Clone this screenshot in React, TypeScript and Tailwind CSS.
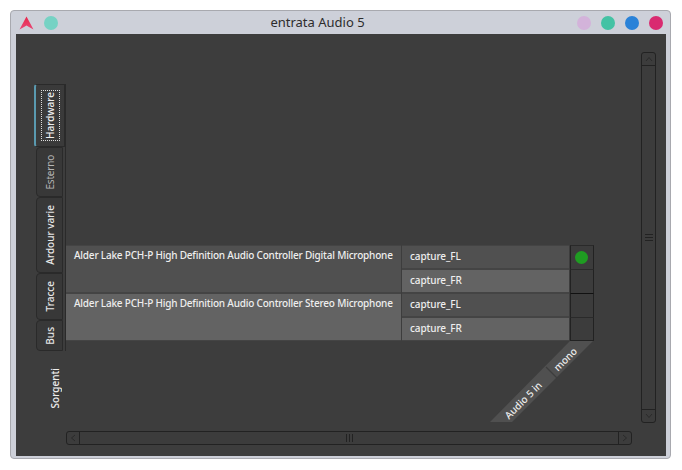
import React from 'react';

const tabs = [
  { label: 'Hardware', h: 'h-[63px]', active: true },
  { label: 'Esterno', h: 'h-[50px]', active: false },
  { label: 'Ardour varie', h: 'h-[76px]', active: false },
  { label: 'Tracce', h: 'h-[47px]', active: false },
  { label: 'Bus', h: 'h-[31px]', active: false },
];

const groups = [
  { name: 'Alder Lake PCH-P High Definition Audio Controller Digital Microphone', on: true },
  { name: 'Alder Lake PCH-P High Definition Audio Controller Stereo Microphone', on: false },
];

const vertical = '[writing-mode:vertical-rl] rotate-180';

const Tab = ({ label, h, active }: { label: string; h: string; active: boolean }) => {
  if (active) {
    return (
      <div className={`${h} w-[31px] -ml-[1px] flex items-center justify-center bg-[#3a3a3a] border border-[#2a2a2a] border-l-2 border-l-[#5a9ab0] rounded-l-[3px]`}>
        <span className={`${vertical} text-[10px] leading-[15px] font-medium text-[#eeeeee] outline-1 outline-dotted outline-[#dddddd] py-[1px] px-[1px]`}>
          {label}
        </span>
      </div>
    );
  }
  return (
    <div className={`${h} w-[27px] ml-[1px] flex items-center justify-center bg-[#383838] border border-[#2a2a2a] rounded-l-[4px]`}>
      <span className={`${vertical} leading-[14px] text-[10px] ${label === 'Esterno' ? 'tracking-[-0.2px] text-[#b5b5b5] font-normal' : 'text-[#e6e6e6] font-medium'}`}>
        {label}
      </span>
    </div>
  );
};

const Grip = ({ vert }: { vert: boolean }) => (
  <div className={`flex ${vert ? 'flex-col gap-[2px] w-[8px]' : 'flex-row gap-[2px] h-[8px]'}`}>
    {[0, 1, 2].map((i) => (
      <div key={i} className={`${vert ? 'h-[1px] w-full' : 'w-[1px] h-full'} bg-[#222222]`} />
    ))}
  </div>
);

const Row = ({ port, light, on, last, first }: { port: string; light: boolean; on?: boolean; last: boolean; first: boolean }) => (
  <div className="flex h-[24px]">
    <div className={`w-[167px] ml-[1px] pl-[8px] pb-[1px] flex items-center text-[10px] tracking-[-0.1px] font-medium text-[#eeeeee] border-y border-[#444444] ${light ? 'bg-[#636363]' : 'bg-[#505050]'}`}>
      {port}
    </div>
    <div className={`w-[24px] ml-[1px] flex items-center justify-center bg-[#3c3c3c] border-x border-t ${first ? 'border-t-[#111111]' : 'border-t-[#2a2a2a]'} border-x-[#222222] ${last ? 'border-b border-b-[#222222]' : ''}`}>
      {on && <div className="w-[13px] h-[13px] rounded-full bg-[#1f9c22] -ml-[1px]" />}
    </div>
  </div>
);

export default function App() {
  return (
    <div className="w-[682px] h-[470px] bg-white pt-[10px] pl-[10px] font-['Noto_Sans',sans-serif]">
      <div className="w-[661px] h-[449px] bg-[#cdd0d9] border border-[#a8a9af] rounded-[4px] flex flex-col">
        <div className="h-[23px] shrink-0 flex items-center pl-[8px] pr-[7px]">
          <svg width="15" height="14" viewBox="0 0 15 14" className="shrink-0">
            <defs>
              <linearGradient id="logo" x1="0" y1="0" x2="0" y2="1">
                <stop offset="0" stopColor="#e8264a" />
                <stop offset="1" stopColor="#e84a78" />
              </linearGradient>
            </defs>
            <path d="M7.5 0.5 L14.5 13.5 L10 11 L7.5 9.5 L5 11 L0.5 13.5 Z" fill="url(#logo)" />
          </svg>
          <div className="w-[14px] h-[14px] ml-[10px] rounded-full bg-[#76d2c4]" />
          <div className="flex-1 text-center text-[13px] text-[#2c2c2c]">entrata Audio 5</div>
          <div className="flex gap-[10px]">
            <div className="w-[14px] h-[14px] rounded-full bg-[#d3b3da]" />
            <div className="w-[14px] h-[14px] rounded-full bg-[#44c2a4]" />
            <div className="w-[14px] h-[14px] rounded-full bg-[#2a82d8]" />
            <div className="w-[14px] h-[14px] rounded-full bg-[#d92a70]" />
          </div>
        </div>

        <div className="ml-[5px] w-[650px] h-[422px] bg-[#3d3d3d] flex">
          <div className="flex-1 flex flex-col">
            <div className="flex flex-1 pt-[50px]">
              <div className="w-[50px] shrink-0 pl-[19px]">
                <div className="flex flex-col w-[31px] border-r border-[#2a2a2a]">
                  {tabs.map((t) => (
                    <Tab key={t.label} {...t} />
                  ))}
                </div>
                <div className="mt-[16px] ml-[13px] h-[42px] flex items-center">
                  <span className={`${vertical} text-[10px] leading-[14px] font-medium text-[#eeeeee]`}>Sorgenti</span>
                </div>
              </div>

              <div className="flex-1 pt-[161px]">
                <div className="relative w-[528px]">
                  {groups.map((g, gi) => (
                    <div key={g.name} className="flex">
                      <div className={`w-[335px] shrink-0 h-[48px] pl-[8px] pt-[1px] whitespace-nowrap text-[10px] tracking-[-0.2px] leading-[16px] font-medium text-[#eeeeee] border-y border-[#444444] ${gi === 0 ? 'bg-[#505050]' : 'bg-[#636363]'}`}>
                        {g.name}
                      </div>
                      <div className="flex flex-col">
                        <Row port="capture_FL" light={false} on={g.on} last={false} first={gi === 1} />
                        <Row port="capture_FR" light last={gi === 1} first={false} />
                      </div>
                    </div>
                  ))}
                  {/* diagonal column headers */}
                  <svg width="104" height="82" viewBox="0 0 104 82" className="absolute left-[424px] top-[96px]">
                    <polygon points="80,0 103,0 22,81 0,81" fill="#505050" />
                    <line x1="56" y1="26" x2="67" y2="37" stroke="#3d3d3d" strokeWidth="1.2" />
                  </svg>
                  <span className="absolute left-[469px] top-[107px] w-[60px] text-center -rotate-45 text-[10px] leading-[14px] font-medium text-[#eeeeee]">mono</span>
                  <span className="absolute left-[427px] top-[148px] w-[60px] text-center -rotate-45 text-[10px] leading-[14px] font-medium text-[#eeeeee]">Audio 5 in</span>
                </div>
              </div>
            </div>

            <div className="h-[14px] ml-[50px] mb-[11px] mr-[9px] flex border border-[#222222] rounded-[3px] bg-[#3c3c3c]">
              <div className="w-[13px] border-r border-[#222222] flex items-center justify-center text-[#2c2c2c]">
                <svg width="6" height="8" viewBox="0 0 6 8"><path d="M5 1 L1.5 4 L5 7" fill="none" stroke="#2a2a2a" /></svg>
              </div>
              <div className="flex-1 flex items-center justify-center"><Grip vert={false} /></div>
              <div className="w-[13px] border-l border-[#222222] flex items-center justify-center">
                <svg width="6" height="8" viewBox="0 0 6 8"><path d="M1 1 L4.5 4 L1 7" fill="none" stroke="#2a2a2a" /></svg>
              </div>
            </div>
          </div>

          <div className="w-[25px] shrink-0 pt-[18px] pb-[33px]">
            <div className="w-[15px] h-full flex flex-col border border-[#222222] rounded-[3px] bg-[#3c3c3c]">
              <div className="h-[13px] border-b border-[#222222] flex items-center justify-center">
                <svg width="8" height="6" viewBox="0 0 8 6"><path d="M1 5 L4 1.5 L7 5" fill="none" stroke="#2a2a2a" /></svg>
              </div>
              <div className="flex-1 flex items-center justify-center"><Grip vert /></div>
              <div className="h-[13px] border-t border-[#222222] flex items-center justify-center">
                <svg width="8" height="6" viewBox="0 0 8 6"><path d="M1 1 L4 4.5 L7 1" fill="none" stroke="#2a2a2a" /></svg>
              </div>
            </div>
          </div>
        </div>
      </div>
    </div>
  );
}
